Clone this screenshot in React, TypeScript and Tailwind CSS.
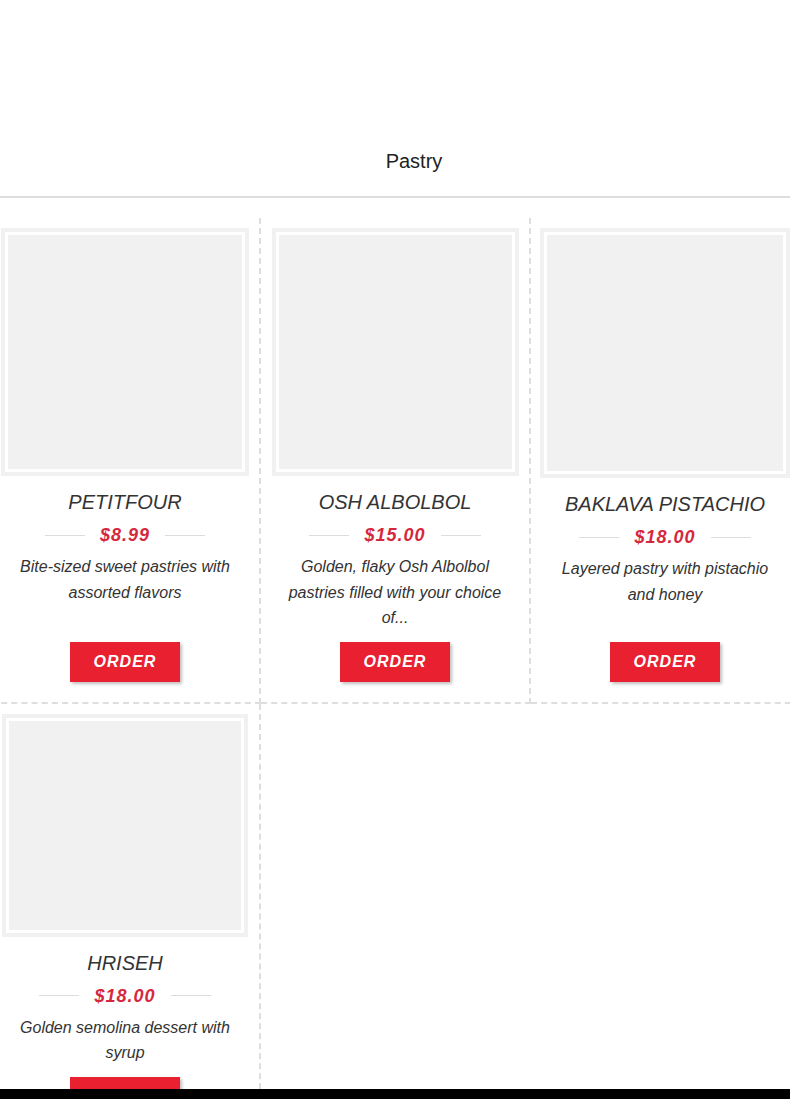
import React from "react";

type Item = {
  name: string;
  price: string;
  desc: string;
  imgW: number;
  imgH: number;
};

const items: Item[] = [
  { name: "PETITFOUR", price: "$8.99", desc: "Bite-sized sweet pastries with assorted flavors", imgW: 248, imgH: 248 },
  { name: "OSH ALBOLBOL", price: "$15.00", desc: "Golden, flaky Osh Albolbol pastries filled with your choice of...", imgW: 247, imgH: 248 },
  { name: "BAKLAVA PISTACHIO", price: "$18.00", desc: "Layered pastry with pistachio and honey", imgW: 250, imgH: 250 },
  { name: "HRISEH", price: "$18.00", desc: "Golden semolina dessert with syrup", imgW: 246, imgH: 223 },
];

const Card = ({ item }: { item: Item }) => {
  return (
    <div className="flex flex-col items-center pt-[10px] pb-[20px] px-[10px] border-r-2 border-b-2 border-dashed border-[#dedede]">
      <div
        className="border-4 border-[#f1f1f1] bg-white p-[3px] flex"
        style={{ width: item.imgW, height: item.imgH }}
      >
        <div className="flex-1 bg-[#f1f1f1]" />
      </div>
      <h3 className="mt-[12px] text-[20px] leading-[28px] italic text-[#333]">{item.name}</h3>
      <div className="mt-[6px] flex items-center gap-[15px]">
        <span className="w-[40px] h-px bg-[#ddd]" />
        <span className="text-[18px] leading-[26px] font-bold italic tracking-[1px] text-[#d6283c]">
          {item.price}
        </span>
        <span className="w-[40px] h-px bg-[#ddd]" />
      </div>
      <p className="mt-[6px] w-[230px] text-center text-[16px] leading-[25.6px] italic text-[#333]">
        {item.desc}
      </p>
      <div className="flex-1 min-h-[11px]" />
      <button
        type="button"
        className="w-[110px] h-[40px] bg-[#e8202f] text-white text-[16px] font-bold italic tracking-[1px] shadow-[2px_2px_3px_rgba(0,0,0,0.25)]"
      >
        ORDER
      </button>
    </div>
  );
};

export default function App() {
  return (
    <div className="min-h-[1099px] bg-white overflow-hidden font-['Liberation_Sans',Arial,sans-serif]">
      <div className="h-[141px]" />
      <div className="flex justify-center pl-[38px]">
        <span className="text-[20px] leading-[40px] text-[#222]">Pastry</span>
      </div>
      <div className="mt-[15px] h-[2px] bg-[#ddd]" />
      <div className="mt-[20px] -ml-[9px] w-[810px] grid grid-cols-3">
        {items.map((it) => (
          <Card key={it.name} item={it} />
        ))}
      </div>
      <div className="fixed bottom-0 left-0 right-0 h-[10px] bg-black" />
    </div>
  );
}
